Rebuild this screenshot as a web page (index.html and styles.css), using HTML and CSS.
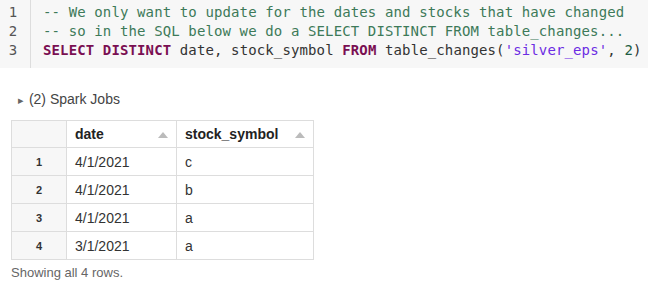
FILE: index.html
```html
<!DOCTYPE html>
<html lang="en">
<head>
    <meta charset="UTF-8">
    <title>Notebook cell</title>
    <link rel="stylesheet" href="styles.css">
</head>
<body>
<div class="code">
    <div class="gutter">
        <div>1</div>
        <div>2</div>
        <div>3</div>
    </div>
    <div class="lines">
        <div class="line cm">-- We only want to update for the dates and stocks that have changed</div>
        <div class="line cm">-- so in the SQL below we do a SELECT DISTINCT FROM table_changes...</div>
        <div class="line"><span class="kw">SELECT</span> <span class="kw">DISTINCT</span> date, stock_symbol <span class="kw">FROM</span> table_changes(<span class="str">'silver_eps'</span>, <span class="num">2</span>)</div>
    </div>
</div>
<div class="output">
    <div class="jobs"><span class="caret">&#9656;</span> (2) Spark Jobs</div>
    <table class="result">
        <thead>
        <tr>
            <th class="idx"></th>
            <th class="col-date">date <span class="sort"></span></th>
            <th class="col-sym">stock_symbol <span class="sort"></span></th>
        </tr>
        </thead>
        <tbody>
        <tr><td class="idx">1</td><td>4/1/2021</td><td>c</td></tr>
        <tr><td class="idx">2</td><td>4/1/2021</td><td>b</td></tr>
        <tr><td class="idx">3</td><td>4/1/2021</td><td>a</td></tr>
        <tr><td class="idx">4</td><td>3/1/2021</td><td>a</td></tr>
        </tbody>
    </table>
    <div class="footer">Showing all 4 rows.</div>
</div>
</body>
</html>
```
FILE: styles.css
```css
body {
    margin: 0;
    padding: 0;
    background: white;
    font-family: "Liberation Sans", Arial, sans-serif;
    color: #333;
}
.code {
    display: flex;
    background-color: #f7f7f7;
    height: 68px;
    font-family: "DejaVu Sans Mono", "Liberation Mono", monospace;
    font-size: 14px;
    letter-spacing: 0.12px;
    line-height: 19px;
}
.gutter {
    width: 31px;
    border-right: 1px solid #dddddd;
    padding-top: 3px;
    color: #555;
    text-align: center;
    box-sizing: border-box;
    padding-right: 4px;
}
.lines {
    padding: 3px 0 0 12px;
    color: #333;
}
.line {
    white-space: pre;
}
.cm {
    color: #3d7a59;
}
.kw {
    color: #7a0f52;
    font-weight: bold;
}
.str {
    color: #6c2de3;
}
.num {
    color: #1f5e44;
}
.output {
    padding: 0 11px;
}
.jobs {
    margin-top: 22px;
    line-height: 18px;
    font-size: 14px;
    color: #444;
}
.caret {
    color: #666;
    font-size: 11px;
    margin-left: 7px;
    margin-right: 1px;
}
.result {
    margin-top: 11px;
    border-collapse: collapse;
    font-size: 14px;
}
.result th, .result td {
    border: 1px solid #dddddd;
    padding: 0 8px;
    text-align: left;
    color: #333;
}
.result th {
    height: 26px;
    font-weight: bold;
    color: #222;
}
.result td {
    height: 27px;
}
.result .idx {
    width: 38px;
    background: #f7f7f7;
    text-align: center;
    font-weight: bold;
    font-size: 11px;
}
.col-date {
    width: 93px;
}
.col-sym {
    width: 120px;
}
.sort {
    float: right;
    width: 0;
    height: 0;
    margin-top: 6px;
    margin-right: 0;
    border-left: 5px solid transparent;
    border-right: 5px solid transparent;
    border-bottom: 6px solid #bbbbbb;
}
.footer {
    margin-top: 4px;
    line-height: 18px;
    font-size: 13px;
    color: #666;
}
```
